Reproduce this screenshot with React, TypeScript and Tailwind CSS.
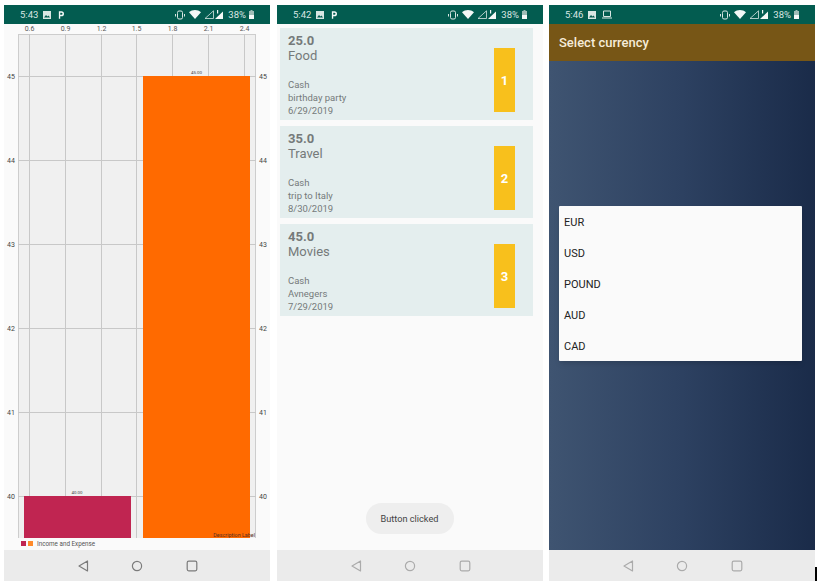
const FONT = "font-['Roboto','Liberation_Sans',sans-serif]";

const EXPENSES = [
  { amount: "25.0", category: "Food", note: "birthday party", date: "6/29/2019", id: 1 },
  { amount: "35.0", category: "Travel", note: "trip to Italy", date: "8/30/2019", id: 2 },
  { amount: "45.0", category: "Movies", note: "Avnegers", date: "7/29/2019", id: 3 },
];

const CURRENCIES = ["EUR", "USD", "POUND", "AUD", "CAD"];

const X_LABELS = [
  { x: 29.5, label: "0.6" },
  { x: 65.5, label: "0.9" },
  { x: 101.5, label: "1.2" },
  { x: 136.5, label: "1.5" },
  { x: 172.5, label: "1.8" },
  { x: 208.5, label: "2.1" },
  { x: 244.5, label: "2.4" },
];

const Y_LABELS = [
  { y: 76.5, label: "45" },
  { y: 160.5, label: "44" },
  { y: 244.5, label: "43" },
  { y: 328.5, label: "42" },
  { y: 412.5, label: "41" },
  { y: 496.5, label: "40" },
];

function StatusBar({ time, laptop }: { time: string; laptop?: boolean }) {
  return (
    <div className="flex h-[19px] shrink-0 items-center bg-[#035c50] pl-4 pr-4 text-[#d9e6e3]">
      <span className="w-[23px] text-[9.5px] leading-none">{time}</span>
      <svg width="8" height="8" viewBox="0 0 8 8" className="shrink-0">
        <path d="M0 0h8v8H0z" fill="currentColor" />
        <path d="M1 6.5l2-2.5 1.5 1.5L5.5 4.5 7 6.5z" fill="#035c50" />
      </svg>
      {laptop ? (
        <svg width="10" height="9" viewBox="0 0 10 9" className="ml-[6px] shrink-0">
          <path d="M1.5 1h7v5.5h-7z" fill="none" stroke="currentColor" />
          <path d="M0 7.5h10v1H0z" fill="currentColor" />
        </svg>
      ) : (
        <svg width="6" height="8" viewBox="0 0 7 9" className="ml-[7px] shrink-0">
          <path d="M1 9V0h3a3 3 0 0 1 0 6H2.6v3zM2.6 1.8v2.5H4a1.25 1.25 0 0 0 0-2.5z" fill="#f4f8f7" fillRule="evenodd" />
        </svg>
      )}
      <div className="ml-auto flex items-center">
        <svg width="10" height="10" viewBox="0 0 10 10" className="shrink-0">
          <path d="M2.5 3.5V2.5a1.5 1.5 0 0 1 1.5-1.5h2a1.5 1.5 0 0 1 1.5 1.5v5a1.5 1.5 0 0 1-1.5 1.5H4a1.5 1.5 0 0 1-1.5-1.5z" fill="none" stroke="currentColor" />
          <path d="M0.5 4v2.5M9.5 4v2.5" stroke="currentColor" />
        </svg>
        <svg width="12" height="9" viewBox="0 0 12 9" className="ml-1 shrink-0">
          <path d="M0 2.2C3.4-.7 8.6-.7 12 2.2L6 9z" fill="#f4f8f7" />
        </svg>
        <svg width="10" height="9" viewBox="0 0 10 9" className="ml-[3px] shrink-0">
          <path d="M9.5 .8v7.7H1z" fill="none" stroke="currentColor" strokeWidth="0.8" />
        </svg>
        <svg width="8" height="9" viewBox="0 0 8 9" className="ml-[1px] shrink-0">
          <path d="M8 1.5V9H0z" fill="#f4f8f7" />
          <path d="M2 0h1.2v3.5H2z" fill="#f4f8f7" />
        </svg>
        <span className="ml-[5px] text-[9.5px] leading-none">38%</span>
        <svg width="5" height="9" viewBox="0 0 5 9" className="ml-[3px] shrink-0">
          <path d="M1.5 0h2v1H5v8H0V1h1.5z" fill="#9fbdb7" />
          <path d="M0 5h5v4H0z" fill="#f4f8f7" />
        </svg>
      </div>
    </div>
  );
}

function NavBar({ dark }: { dark?: boolean }) {
  const stroke = dark ? "#7b7b7b" : "#ababab";
  return (
    <div className="flex h-[31px] shrink-0 items-center bg-[#ebebeb] pl-[73px]">
      <svg width="12" height="12" viewBox="0 0 12 12" className="shrink-0">
        <path d="M10.5 1v10L2 6z" fill="none" stroke={stroke} strokeWidth="1.2" strokeLinejoin="round" />
      </svg>
      <svg width="12" height="12" viewBox="0 0 12 12" className="ml-[42px] shrink-0">
        <circle cx="6" cy="6" r="4.6" fill="none" stroke={stroke} strokeWidth="1.2" />
      </svg>
      <svg width="12" height="12" viewBox="0 0 12 12" className="ml-[43px] shrink-0">
        <rect x="1.2" y="1.2" width="9.6" height="9.6" rx="1.5" fill="none" stroke={stroke} strokeWidth="1.2" />
      </svg>
    </div>
  );
}

function BarChart() {
  return (
    <svg viewBox="4 24 266 526" className="block h-[526px] w-[266px]" fontFamily="Roboto, sans-serif">
      <rect x="18" y="34" width="238" height="504" fill="#f0f0f0" />
      <path d="M18 34.5h238M18.5 34v504M255.5 34v504" stroke="#cdcdcd" strokeWidth="1" fill="none" />
      {X_LABELS.map((t) => (
        <g key={t.label}>
          <path d={`M${t.x} 34v504`} stroke="#c8c8c8" />
          <text x={t.x} y="30.5" fontSize="7" fill="#555" textAnchor="middle">{t.label}</text>
        </g>
      ))}
      {Y_LABELS.map((t) => (
        <g key={t.label}>
          <path d={`M18 ${t.y}h238`} stroke="#c8c8c8" />
          <text x="11" y={t.y + 2.5} fontSize="7" fill="#444" textAnchor="middle">{t.label}</text>
          <text x="263" y={t.y + 2.5} fontSize="7" fill="#444" textAnchor="middle">{t.label}</text>
        </g>
      ))}
      <rect x="24" y="496" width="107" height="42" fill="#c02551" />
      <rect x="143" y="76" width="107" height="462" fill="#ff6a00" />
      <text x="77" y="493.5" fontSize="4.4" fill="#444" textAnchor="middle">40.00</text>
      <text x="196.5" y="73.5" fontSize="4.4" fill="#444" textAnchor="middle">45.00</text>
      <text x="255" y="537" fontSize="5.4" fill="#5a3020" textAnchor="end">Description Label</text>
      <rect x="21" y="541" width="5" height="5" fill="#c02551" />
      <rect x="28" y="541" width="5" height="5" fill="#ff8a2a" />
      <text x="37" y="546" fontSize="6.3" fill="#555">Income and Expense</text>
    </svg>
  );
}

function ExpenseCard({ amount, category, note, date, id }: (typeof EXPENSES)[number]) {
  return (
    <div className="flex h-[92px] items-start justify-between bg-[#e4eeee] pt-[5px] pl-2 pr-[18px]">
      <div className="text-[#757a7a]">
        <div className="text-[13px] leading-[15px] font-bold">{amount}</div>
        <div className="text-[13px] leading-[15px]">{category}</div>
        <div className="mt-[15px] text-[9.5px] leading-[13px]">Cash</div>
        <div className="text-[9.5px] leading-[13px]">{note}</div>
        <div className="text-[9.5px] leading-[13px]">{date}</div>
      </div>
      <div className="mt-[15px] flex h-[64px] w-[21px] items-center justify-center bg-[#f8c01c] pt-[1px] text-[13px] font-bold text-white">
        {id}
      </div>
    </div>
  );
}

export default function App() {
  return (
    <div className={`flex h-[587px] w-[821px] items-start bg-white pt-[5px] pl-1 ${FONT}`}>
      <section className="flex h-[576px] w-[266px] flex-col bg-[#fafafa]">
        <StatusBar time="5:43" />
        <div className="flex-1">
          <BarChart />
        </div>
        <NavBar dark />
      </section>

      <section className="ml-[7px] flex h-[576px] w-[266px] flex-col bg-[#fafafa]">
        <StatusBar time="5:42" />
        <div className="flex flex-1 flex-col justify-between pt-1 pr-[10px] pb-4 pl-[3px]">
          <div className="flex flex-col gap-[6px]">
            {EXPENSES.map((e) => (
              <ExpenseCard key={e.id} {...e} />
            ))}
          </div>
          <div className="ml-[6px] flex h-[31px] w-[88px] items-center justify-center self-center rounded-full bg-[#eeeeee] pt-[1px] text-[9.2px] text-[#444]">
            Button clicked
          </div>
        </div>
        <NavBar />
      </section>

      <section className="ml-[6px] flex h-[576px] w-[266px] flex-col">
        <StatusBar time="5:46" laptop />
        <div className="flex h-[37px] shrink-0 items-center bg-[#775616] pl-[10px] text-[13px] font-medium text-[#f6ecd9]">
          Select currency
        </div>
        <div className="flex-1 bg-gradient-to-r from-[#3f5471] via-[#2d4161] to-[#1a2b49] pt-[145px] pl-[10px]">
          <div className="flex h-[155px] w-[243px] flex-col justify-center rounded-[1px] bg-[#fafafa] pt-[2px] pl-[5px] shadow-md">
            {CURRENCIES.map((c) => (
              <div key={c} className="h-[31px] text-[11px] leading-[31px] text-[#222]">
                {c}
              </div>
            ))}
          </div>
        </div>
        <NavBar />
      </section>

      <div className="mt-[562px] h-[14px] w-[2px] bg-black" />
    </div>
  );
}
